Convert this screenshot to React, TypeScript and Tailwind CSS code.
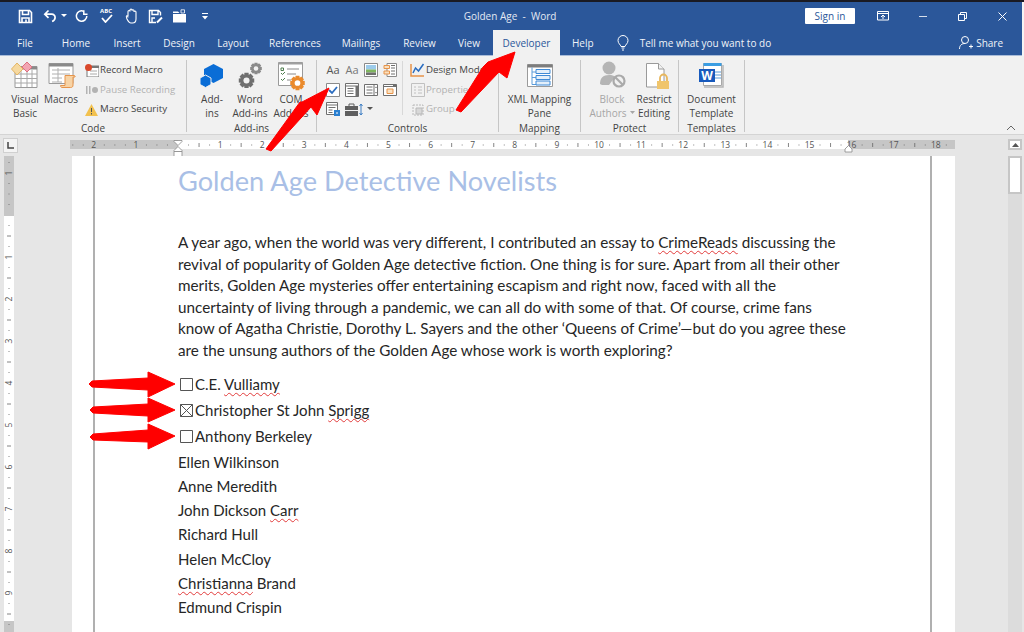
import React from "react";

const ui = { fontFamily: '"Open Sans","Noto Sans",sans-serif' };
const doc = { fontFamily: 'Lato,"Noto Sans",sans-serif' };

const tabs: [string, number][] = [
  ["File", 50], ["Home", 52], ["Insert", 50], ["Design", 54], ["Layout", 54], ["References", 70], ["Mailings", 62], ["Review", 55], ["View", 44],
];

function Qat() {
  return (
    <div className="flex items-center pl-[18px] w-[300px]">
      <svg width="15" height="15" viewBox="0 0 15 15" fill="none" stroke="white" strokeWidth="1.6">
        <path d="M1.5 1.500h10l2 2v10h-12z" />
        <path d="M4.500 1.500v4h6v-4M4 13.500v-4.500h7v4.500" />
        <path d="M8 10.500v2.500" />
      </svg>
      <svg className="ml-[10px]" width="14" height="14" viewBox="0 0 14 14" fill="none" stroke="white" strokeWidth="1.7">
        <path d="M5.500 1.500 1.800 5.200l3.700 3.700M1.800 5.200h7a3.300 3.300 0 0 1 3.300 3.300c0 2-1.300 3.300-3 4" />
      </svg>
      <svg className="ml-[4px]" width="6" height="4" viewBox="0 0 6 4" fill="white"><path d="M0 0h6L3 3z" /></svg>
      <svg className="ml-[8px]" width="13" height="13" viewBox="0 0 13 13" fill="none" stroke="white" strokeWidth="1.500">
        <path d="M8.500 1.200A5.200 5.200 0 1 0 11.800 6M8.800 .2v4.100h3.700" />
      </svg>
      <div className="relative ml-[12px] w-[14px] h-[15px]">
        <span className="absolute top-[-2px] left-[0px] text-[6px] leading-[8px] font-bold text-white">ABC</span>
        <svg className="absolute top-[5px] left-[1px]" width="12" height="9" viewBox="0 0 12 9" fill="none" stroke="white" strokeWidth="1.800"><path d="M1 4l3.500 4L11 1" /></svg>
      </div>
      <svg className="ml-[11px]" width="13" height="16" viewBox="0 0 13 16" fill="none" stroke="white" strokeWidth="1.100">
        <path d="M3 8V3.500a1 1 0 0 1 2 0V2a1 1 0 0 1 2 0v.8a1 1 0 0 1 2 0V4a1 1 0 0 1 2 0v7c0 2.500-1.500 4-3.500 4H6C4 15 3 13 2 11 1.500 9.500 1 8.500 1.500 8S3 8 3 9.500" />
      </svg>
      <svg className="ml-[10px]" width="15" height="15" viewBox="0 0 15 15" fill="none" stroke="white" strokeWidth="1.400">
        <path d="M8 13.500H1.500v-12h9l2 2v3M4 1.500v4h6v-4M4 13v-4h3" />
        <path d="M9 13.500l5-5" strokeWidth="2" />
      </svg>
      <svg className="ml-[9px]" width="15" height="14" viewBox="0 0 15 14" fill="white">
        <path d="M1 5h13v8.500H1z" />
        <path d="M1 4V2.500h5L7.500 4z" />
        <path d="M9 .8h3.500V4H9z" fill="none" stroke="white" strokeWidth=".8" />
      </svg>
      <svg className="ml-[15px]" width="6" height="7" viewBox="0 0 6 7" fill="white"><path d="M0 0h6v1H0zM0 3h6L3 6.500z" /></svg>
    </div>
  );
}

function Big({ icon, lines, w, gray, caret }: { icon: React.ReactNode; lines: string[]; w: number; gray?: boolean; caret?: boolean }) {
  return (
    <div className="flex flex-col items-center shrink-0" style={{ width: w }}>
      <div className="h-[28px] shrink-0 flex justify-center">{icon}</div>
      <div className={`mt-[3.5px] text-center text-[10px] leading-[14px] whitespace-nowrap ${gray ? "text-[#a6a6a6]" : "text-[#444444]"}`}>
        {lines.map((l, i) => (
          <div key={l} className="flex items-center justify-center">
            {l}
            {caret && i === lines.length - 1 && (
              <svg className="ml-[3px]" width="5" height="3" viewBox="0 0 5 3" fill="#a6a6a6"><path d="M0 0h5L2.500 3z" /></svg>
            )}
          </div>
        ))}
      </div>
    </div>
  );
}

function Group({ w, label, children, className = "" }: { w: number; label: string; children: React.ReactNode; className?: string }) {
  return (
    <div className="shrink-0 flex flex-col border-r border-[#c6c6c6] my-[4px] h-[72px]" style={{ width: w }}>
      <div className={`flex h-[60px] shrink-0 ${className}`}>{children}</div>
      <div className="text-center text-[10px] leading-[12px] text-[#444444] mt-[2px]">{label}</div>
    </div>
  );
}

function gear(cx: number, cy: number, r: number) {
  const pts: string[] = [];
  for (let i = 0; i < 8; i++) {
    const a = (i * Math.PI) / 4;
    const w = 0.26;
    const p = (rr: number, t: number) => `${(cx + rr * Math.cos(t)).toFixed(2)} ${(cy + rr * Math.sin(t)).toFixed(2)}`;
    pts.push(p(r * 0.76, a - w * 1.5), p(r, a - w), p(r, a + w), p(r * 0.76, a + w * 1.5));
  }
  return `M${pts.join("L")}Z`;
}

const Gear = ({ x, y, r, c, hole = "#f1f1f1" }: { x: number; y: number; r: number; c: string; hole?: string }) => (
  <>
    <path d={gear(x, y, r)} fill={c} />
    <circle cx={x} cy={y} r={r * 0.38} fill={hole} />
  </>
);

const Table = () => (
  <svg width="30" height="28" viewBox="0 0 30 28">
    <path d="M5 6.500h22v21H5z" fill="#fff" stroke="#9a9a9a" />
    <path d="M5 6.500h22v3H5z" fill="#8a8a8a" />
    <path d="M5 14h22M5 18.500h22M5 23h22M11 10v17M17 10v17M22 10v17" stroke="#a8a8a8" />
    <path d="M1.500 9 7 3l6 6-6 6z" fill="#f6d9a0" stroke="#e3b565" />
    <path d="M12 7l5-5 5 5-5 5z" fill="#f2a5b2" stroke="#dd6f80" />
  </svg>
);
const Macros = () => (
  <svg width="30" height="28" viewBox="0 0 30 28">
    <path d="M3 3.500h24v20H3z" fill="#fff" stroke="#9a9a9a" />
    <path d="M3 3.500h24v3H3z" fill="#8a8a8a" />
    <path d="M6 10h18M6 14h18M6 18h10M6 22h10M12 8v14" stroke="#b0b0b0" />
    <path d="M19 15.500h9c1 0 1.500 1 1 1.500v0h-2v8c0 2-1 2.500-2.500 2.500H16c-1 0-1.500-1-1.500-2H19z" fill="#f7d3a5" stroke="#e6934a" />
  </svg>
);
const Hex = () => (
  <svg width="26" height="28" viewBox="0 0 26 28">
    <path d="M14.500 4l9.500 5v9l-9.500 5L5 18V9z" fill="#0a6dd6" />
    <path d="M6.500 15l5.500 3v6.500l-5.500 3-5.500-3V18z" fill="#0a6dd6" stroke="#f1f1f1" strokeWidth="1" />
  </svg>
);
const WordAdd = () => (
  <svg width="26" height="28" viewBox="0 0 26 28">
    <Gear x={9.500} y={20.500} r={8} c="#6f6f6f" />
    <Gear x={19} y={8.500} r={6} c="#8a8a8a" />
  </svg>
);
const ComAdd = () => (
  <svg className="overflow-visible" width="30" height="28" viewBox="0 0 30 28">
    <path d="M2.500 2.500h24v23h-24z" fill="#fff" stroke="#9a9a9a" />
    <path d="M2.500 2.500h24v2h-24z" fill="#a0a0a0" />
    <path d="M5 8h2.500v2.500H5zM5 13l1.500 1.500L9 12M5 19l1.500 1.500L9 18" fill="none" stroke="#4d7d4d" />
    <path d="M11 9h12M11 14h9M11 20h4" stroke="#8a8a8a" />
    <Gear x={21.500} y={23} r={7.500} c="#ea8a2c" hole="#fff" />
  </svg>
);
const XmlPane = () => (
  <svg width="26" height="28" viewBox="0 0 26 28">
    <path d="M.5 4.500h25v22H.5z" fill="#fff" stroke="#9a9a9a" />
    <path d="M.5 4.500h25v3H.5z" fill="#7d7d7d" />
    <path d="M5 7.500v17h4M5 12h4M5 17.500h4" stroke="#5a9bd8" fill="none" />
    <path d="M9 9.500h14v4H9zM9 15.500h14v4H9zM9 21h14v4H9z" fill="#e3effa" stroke="#3f8ad6" />
  </svg>
);
const Block = () => (
  <svg width="28" height="28" viewBox="0 0 28 28">
    <circle cx="11" cy="8" r="6.500" fill="#b5b5b5" />
    <path d="M2 24c0-6 3-9 9-9 3 0 5 .5 6 2l-6 8H4z" fill="#b5b5b5" />
    <circle cx="21" cy="21" r="5.500" fill="#f1f1f1" stroke="#aaaaaa" strokeWidth="2.200" />
    <path d="M17 17l8 8" stroke="#aaaaaa" strokeWidth="2.200" />
  </svg>
);
const Restrict = () => (
  <svg className="overflow-visible" width="28" height="28" viewBox="0 0 28 28">
    <path d="M6.500 3.500h12l5.500 5.500v18H6.500z" fill="#fff" stroke="#9a9a9a" />
    <path d="M18.500 3.500V9h5.500" fill="#f1f1f1" stroke="#9a9a9a" />
    <path d="M20 21v-3a3.500 3.500 0 0 1 7 0v3" fill="none" stroke="#e8b75d" strokeWidth="1.800" />
    <path d="M17 21h12v8H17z" fill="#f0c56c" />
  </svg>
);
const WordDoc = () => (
  <svg width="30" height="28" viewBox="0 0 30 28">
    <path d="M7 27h19V5" fill="none" stroke="#b5b5b5" strokeWidth="1.500" />
    <path d="M6.500 3.500h18v22h-18z" fill="#fff" stroke="#a8a8a8" />
    <path d="M6.500 3h18v3h-18z" fill="#3b9de2" />
    <path d="M18 12h6M18 15h6M18 18h6" stroke="#5a9bd8" />
    <path d="M2 9h16v13H2z" fill="#185abd" />
    <text x="10" y="20" textAnchor="middle" fontSize="12" fontWeight="700" fill="#fff" style={ui}>W</text>
  </svg>
);

function MiniIcon({ kind }: { kind: string }) {
  const s = "#6f6f6f";
  const common = { width: 14, height: 14, viewBox: "0 0 14 14", fill: "none" as const, stroke: s };
  switch (kind) {
    case "pic":
      return <svg {...common}><path d="M.5 .5h13v13H.5z" fill="#fff" stroke="#8a8a8a" /><path d="M2 2h10v4.500H2z" fill="#9ccbeb" stroke="none" /><path d="M2 6.500h10v3H2z" fill="#7fb55f" stroke="none" /><path d="M2 9.500h10V12H2z" fill="#6f6f6f" stroke="none" /></svg>;
    case "combo":
      return <svg {...common}><path d="M4 .5h9.500v13H4z" fill="#fff" stroke="#8a8a8a" /><path d="M1 2.500h5.500v3H1zM1 8h5.500v3H1z" fill="#f9e0c0" stroke="#e6934a" /><path d="M8 2.500h4M8 5h4M8 8h4M8 11h4" /></svg>;
    case "check":
      return <svg {...common}><path d="M.5 .5h13v13H.5z" fill="#fff" stroke="#8a8a8a" /><path d="M3 7l3 3 5-6" stroke="#2a6cbf" strokeWidth="1.800" /></svg>;
    case "list":
      return <svg {...common}><path d="M.5 .5h13v13H.5z" fill="#fff" /><path d="M.5 3h13M2.500 5.500h6M2.500 8h6M2.500 10.500h6" /><path d="M10.500 3h3v10.500h-3z" fill="#6f6f6f" stroke="none" /></svg>;
    case "list2":
      return <svg {...common}><path d="M.5 1.500h13v11H.5z" fill="#fff" /><path d="M2.500 4h6M2.500 7h6M2.500 10h6M10 1.500v11" /><path d="M11 5h2L12 3.500zM11 9h2L12 10.500z" fill={s} stroke="none" /></svg>;
    case "date":
      return <svg {...common}><path d="M.5 1.500h13v11H.5z" fill="#fff" /><path d="M.5 3.500h13" /><path d="M4 6h6v4.500H4z" fill="#f9e0c0" stroke="#e6934a" /><path d="M10 1.500h3.500v2H10z" fill={s} stroke="none" /></svg>;
    case "form":
      return <svg {...common}><path d="M.5 .5h11v12H.5z" fill="#fff" /><path d="M.5 3h11M2.500 5.500h7M2.500 8h4M2.500 10.500h4" /><path d="M8 8h6v6H8z" fill="#2a7fd0" stroke="none" /><path d="M10 11h2" stroke="#fff" /></svg>;
    default:
      return <svg width="18" height="13" viewBox="0 0 18 13"><path d="M0 3h13v10H0z" fill="#5f5f5f" /><path d="M4 3V1h5v2" fill="none" stroke="#5f5f5f" /><path d="M0 7.500h13" stroke="#f1f1f1" /><path d="M16 1v11M14.500 3L16 1l1.500 2M14.500 10l1.500 2 1.500-2" fill="none" stroke="#3f7fc4" /></svg>;
  }
}

function Small({ icon, text, gray }: { icon: React.ReactNode; text: string; gray?: boolean }) {
  return (
    <div className="flex items-center h-[19.5px] whitespace-nowrap">
      <div className="w-[17px] flex justify-center">{icon}</div>
      <span className={`text-[9.7px] ${gray ? "text-[#b1b1b1]" : "text-[#444444]"}`}>{text}</span>
    </div>
  );
}

const Sq = ({ children }: { children: React.ReactNode }) => (
  <span className="underline decoration-wavy decoration-[#e23b3b] decoration-1 underline-offset-2">{children}</span>
);

const Box = ({ x }: { x?: boolean }) => (
  <svg className="shrink-0 mr-[1px]" width="16" height="14" viewBox="0 0 16 14" fill="none" stroke="#555" strokeWidth="1">
    <path d="M2.500 .5h12v12h-12z" />
    {x && <path d="M2.500 .5l12 12M14.500 .5l-12 12" />}
  </svg>
);

function HRuler() {
  const u = 42.1, z = 108;
  const nums: React.ReactNode[] = [];
  for (let n = -2; n <= 18; n++) {
    if (n === 0) continue;
    const x = z + n * u;
    nums.push(<text key={n} x={x} y="7.500" textAnchor="middle" fontSize="8.500" fill="#555" style={ui}>{Math.abs(n)}</text>);
  }
  const ticks: React.ReactNode[] = [];
  for (let i = -10; i <= 74; i++) {
    if (i % 4 === 0) continue;
    const x = z + (i * u) / 4;
    ticks.push(i % 4 === 2
      ? <path key={i} d={`M${x} 3v4`} stroke="#666" strokeWidth=".8" />
      : <path key={i} d={`M${x} 4.500v1`} stroke="#666" strokeWidth=".8" />);
  }
  return (
    <svg width="885" height="18" viewBox="0 0 885 18" className="block">
      <path d="M0 0h108v9H0zM778 0h107v9H778z" fill="#c6c6c6" />
      <path d="M108 0h670v9H108z" fill="#fff" />
      {ticks}
      {nums}
      <path d="M104 .5h8v1l-4 4-4-4z M104 10.500l4-4 4 4v1h-8z" fill="#fff" stroke="#888" strokeWidth=".8" />
      <path d="M104 11.500h8v5h-8z" fill="#fff" stroke="#888" strokeWidth=".8" />
      <path d="M775 9l3.500-3.500L782 9v3h-7z" fill="#fff" stroke="#888" strokeWidth=".8" />
    </svg>
  );
}

function VRuler() {
  const u = 42, z = 59;
  const t: React.ReactNode[] = [];
  for (let n = -1; n <= 9; n++) {
    if (n === 0) continue;
    const y = z + n * u;
    t.push(<text key={n} x="5" y={y + 3} textAnchor="middle" fontSize="8.500" fill="#555" style={ui} transform={`rotate(-90 5 ${y})`}>{Math.abs(n)}</text>);
  }
  for (let i = -5; i <= 41; i++) {
    if (i % 4 === 0) continue;
    const y = z + (i * u) / 4;
    t.push(i % 4 === 2
      ? <path key={`k${i}`} d={`M3 ${y}h4`} stroke="#666" strokeWidth=".8" />
      : <path key={`k${i}`} d={`M4.500 ${y}h1`} stroke="#666" strokeWidth=".8" />);
  }
  return (
    <svg width="10" height="476" viewBox="0 0 10 476" className="block ml-[4px]">
      <path d="M0 0h10v60H0zM0 465h10v11H0z" fill="#c6c6c6" />
      <path d="M0 60h10v405H0z" fill="#fff" />
      {t}
    </svg>
  );
}

export default function App() {
  return (
    <div className="relative w-[1024px] h-[632px] overflow-hidden bg-[#e6e6e6]" style={ui}>
      <div className="h-[2px] bg-[#1a1a22]" />
      <div className="bg-[#f4f4f4] h-[54px]">
        <div className="bg-[#2b579a] h-[54px] w-[1022px] text-white border-b border-[#a9bcd9]">
          <div className="flex items-center h-[28px]">
            <Qat />
            <div className="w-[420px] text-center text-[10px] text-[#e3e9f3]">Golden Age&nbsp; -&nbsp; Word</div>
            <div className="ml-[85px] w-[50px] h-[16px] bg-white rounded-[1px] text-[#2b579a] text-[10px] leading-[16px] text-center">Sign in</div>
            <svg className="ml-[22px]" width="12" height="10" viewBox="0 0 12 10" fill="none" stroke="white"><path d="M.5 .5h11v8.500H.5zM.5 2.500h11M6 8V4.500M4 6l2-2 2 2" /></svg>
            <div className="ml-[30px] w-[8px] h-[1px] bg-[#d5deeb]" />
            <svg className="ml-[31px]" width="9" height="9" viewBox="0 0 9 9" fill="none" stroke="white"><path d="M.5 2.500h6v6h-6zM2.500 2.500v-2h6v6h-2" /></svg>
            <svg className="ml-[31px]" width="9" height="9" viewBox="0 0 9 9" fill="none" stroke="white"><path d="M.5 .5l8 8M8.500 .5l-8 8" /></svg>
          </div>
          <div className="flex h-[25px] items-start text-[10px]">
            {tabs.map(([t, w]) => (
              <div key={t} className="text-center leading-[26px] text-[#f0f3f8] shrink-0" style={{ width: w }}>{t}</div>
            ))}
            <div className="relative w-[67px] h-[26px] ml-[2px] bg-[#f1f1f1] text-[#2b579a] text-center leading-[26px] shrink-0">Developer</div>
            <div className="ml-[12px] leading-[26px] text-[#f0f3f8]">Help</div>
            <svg className="ml-[23px] mt-[5px]" width="12" height="16" viewBox="0 0 12 16" fill="none" stroke="white"><path d="M4 11.500C3.500 9.500 1 8.500 1 5.500a5 5 0 0 1 10 0c0 3-2.500 4-3 6zM4.500 13h3M5 15h2" /></svg>
            <div className="ml-[11px] leading-[26px] text-[#f0f3f8]">Tell me what you want to do</div>
            <svg className="ml-[188px] mt-[5px]" width="14" height="15" viewBox="0 0 14 15" fill="none" stroke="white"><circle cx="6" cy="5" r="3.500" /><path d="M.5 14c0-4 2.500-5.500 5.500-5.500M10 11.500h4M12 9.500v4" /></svg>
            <div className="ml-[3px] leading-[26px] text-[#f0f3f8]">Share</div>
          </div>
        </div>
      </div>

      <div className="relative flex h-[78px] bg-[#f1f1f1]">
        <Group w={187} label="Code" className="pl-[8px]">
          <Big w={34} icon={<Table />} lines={["Visual", "Basic"]} />
          <Big w={38} icon={<Macros />} lines={["Macros"]} />
          <div className="ml-[3px] mt-[1px]">
            <Small icon={<svg width="14" height="13" viewBox="0 0 14 13"><path d="M2 2h12v11H2z" fill="#fff" stroke="#777" /><path d="M2 2h12v2H2z" fill="#777" /><path d="M5 7h7M5 10h7" stroke="#aaa" /><circle cx="3.500" cy="3.500" r="3.500" fill="#d9482b" /></svg>} text="Record Macro" />
            <Small gray icon={<svg width="12" height="8" viewBox="0 0 12 8" fill="#b3b3b3"><path d="M0 0h1.500v8H0zM3 0h1.500v8H3z" /><circle cx="9" cy="4" r="3" /></svg>} text="Pause Recording" />
            <Small icon={<svg width="13" height="12" viewBox="0 0 13 12"><path d="M6.500 0L13 12H0z" fill="#f2c14e" /><path d="M6.500 4v4M6.500 9v1.500" stroke="#555" /></svg>} text="Macro Security" />
          </div>
        </Group>
        <Group w={130} label="Add-ins" className="pl-[8px]">
          <Big w={34} icon={<Hex />} lines={["Add-", "ins"]} />
          <Big w={42} icon={<WordAdd />} lines={["Word", "Add-ins"]} />
          <Big w={40} icon={<ComAdd />} lines={["COM", "Add-ins"]} />
        </Group>
        <Group w={182} label="Controls" className="pl-[9px]">
          <div className="w-[77px] mt-[0.5px] border-r border-[#d8d8d8] h-[54px] shrink-0">
            <div className="flex items-center h-[19.5px] gap-[5px]">
              <span className="w-[14px] text-[11px] text-[#555555] text-center">Aa</span>
              <span className="w-[14px] text-[11px] text-[#777777] text-center">Aa</span>
              <MiniIcon kind="pic" />
              <MiniIcon kind="combo" />
            </div>
            <div className="flex items-center h-[19.5px] gap-[5px]">
              <MiniIcon kind="check" />
              <MiniIcon kind="list" />
              <MiniIcon kind="list2" />
              <MiniIcon kind="date" />
            </div>
            <div className="flex items-center h-[19.5px] gap-[5px]">
              <MiniIcon kind="form" />
              <MiniIcon kind="case" />
              <svg className="-ml-[1px]" width="6" height="4" viewBox="0 0 6 4" fill="#555"><path d="M0 0h6L3 3z" /></svg>
            </div>
          </div>
          <div className="pl-[6px] mt-[1px]">
            <Small icon={<svg width="15" height="15" viewBox="0 0 15 15" fill="none"><path d="M1 1v12h13" stroke="#e6934a" strokeWidth="1.500" /><path d="M3 10l2.500-5 3 3 5-7" stroke="#2a6cbf" strokeWidth="1.500" /></svg>} text="Design Mode" />
            <Small gray icon={<svg width="14" height="14" viewBox="0 0 14 14" fill="none" stroke="#c0c0c0"><path d="M.5 .5h13v13H.5zM3 4h2M3 7h2M3 10h2M7 4h4M7 7h4M7 10h4" /></svg>} text="Properties" />
            <Small gray icon={<svg width="14" height="14" viewBox="0 0 14 14" fill="none" stroke="#b8b8b8"><path d="M2 2h10v10H2z" strokeDasharray="2 1" /><path d="M5 5h6v6H5z" fill="#d8d8d8" /></svg>} text="Group" />
          </div>
        </Group>
        <Group w={82} label="Mapping">
          <Big w={81} icon={<XmlPane />} lines={["XML Mapping", "Pane"]} />
        </Group>
        <Group w={98} label="Protect" className="pl-[6px]">
          <Big gray caret w={50} icon={<Block />} lines={["Block", "Authors"]} />
          <Big w={34} icon={<Restrict />} lines={["Restrict", "Editing"]} />
        </Group>
        <Group w={66} label="Templates">
          <Big w={65} icon={<WordDoc />} lines={["Document", "Template"]} />
        </Group>
        <svg className="absolute right-[8px] bottom-[3px]" width="10" height="6" viewBox="0 0 10 6" fill="none" stroke="#666"><path d="M1 5l4-4 4 4" /></svg>
      </div>

      <div className="h-[22px] flex border-t border-[#d4d4d4]">
        <div className="ml-[3px] mt-[3px] w-[15px] h-[15px] bg-[#f4f4f4] border border-[#d0d0d0] flex items-center justify-center">
          <svg width="7" height="7" viewBox="0 0 7 7" fill="none" stroke="#444" strokeWidth="1.500"><path d="M1 0v6h6" /></svg>
        </div>
        <div className="ml-[52px] mt-[5px]"><HRuler /></div>
        <div className="ml-[53px] mt-[4px] w-[14px] h-[11px] bg-white border-2 border-[#c6c6c6] flex items-center justify-center">
          <svg width="7" height="4" viewBox="0 0 7 4" fill="#555"><path d="M3.500 0L7 4H0z" /></svg>
        </div>
      </div>

      <div className="flex h-[476px]">
        <div className="w-[72px] shrink-0"><VRuler /></div>
        <div className="w-[883px] shrink-0 bg-white pl-[21px]">
          <div className="w-[839px] h-full border-x-2 border-[#b0b0b0] pl-[83px] text-[#262626]" style={doc}>
            <div className="text-[27.2px] leading-[50px] text-[#a9bfe6] whitespace-nowrap">Golden Age Detective Novelists</div>
            <div className="mt-[26px] text-[15.25px] leading-[21.6px] whitespace-nowrap">
              <div>A year ago, when the world was very different, I contributed an essay to <Sq>CrimeReads</Sq> discussing the</div>
              <div>revival of popularity of Golden Age detective fiction. One thing is for sure. Apart from all their other</div>
              <div>merits, Golden Age mysteries offer entertaining escapism and right now, faced with all the</div>
              <div>uncertainty of living through a pandemic, we can all do with some of that. Of course, crime fans</div>
              <div>know of Agatha Christie, Dorothy L. Sayers and the other ‘Queens of Crime’—but do you agree these</div>
              <div>are the unsung authors of the Golden Age whose work is worth exploring?</div>
            </div>
            <div className="mt-[10px] text-[15px] whitespace-nowrap">
              <div className="flex items-center h-[26px]"><Box /><span>C.E. <Sq>Vulliamy</Sq></span></div>
              <div className="flex items-center h-[26px]"><Box x /><span>Christopher St John <Sq>Sprigg</Sq></span></div>
              <div className="flex items-center h-[26px]"><Box /><span>Anthony Berkeley</span></div>
              <div className="leading-[24.3px]">Ellen Wilkinson</div>
              <div className="leading-[24.3px]">Anne Meredith</div>
              <div className="leading-[24.3px]">John Dickson <Sq>Carr</Sq></div>
              <div className="leading-[24.3px]">Richard Hull</div>
              <div className="leading-[24.3px]">Helen McCloy</div>
              <div className="leading-[24.3px]"><Sq>Christianna</Sq> Brand</div>
              <div className="leading-[24.3px]">Edmund Crispin</div>
            </div>
          </div>
        </div>
        <div className="ml-[53px] w-[14px] bg-[#dcdcdc]">
          <div className="h-[38px] bg-white border-2 border-[#c6c6c6]" />
        </div>
      </div>

      <svg className="absolute left-0 top-0 pointer-events-none" width="1024" height="632" viewBox="0 0 1024 632" fill="#ff0000" stroke="#ff0000" strokeLinejoin="round">
        <path d="M329 88 L317 115 L311 107 L271 151 L266 149 L300 102 L302 102 Z" />
        <path d="M515 52 L507 78 L499 72 L461 112 L456 110 L483 67 L488 62 Z" />
        <path d="M175 384 L148 397 L148 390 L92 387 L89 384 L92 381 L148 378 L148 372 Z" />
        <path d="M175 410 L148 422 L148 416 L93 413 L90 410 L93 407 L148 404 L148 398 Z" />
        <path d="M175 436 L148 449 L148 442 L93 440 L90 437 L93 434 L148 430 L148 424 Z" />
      </svg>
    </div>
  );
}
